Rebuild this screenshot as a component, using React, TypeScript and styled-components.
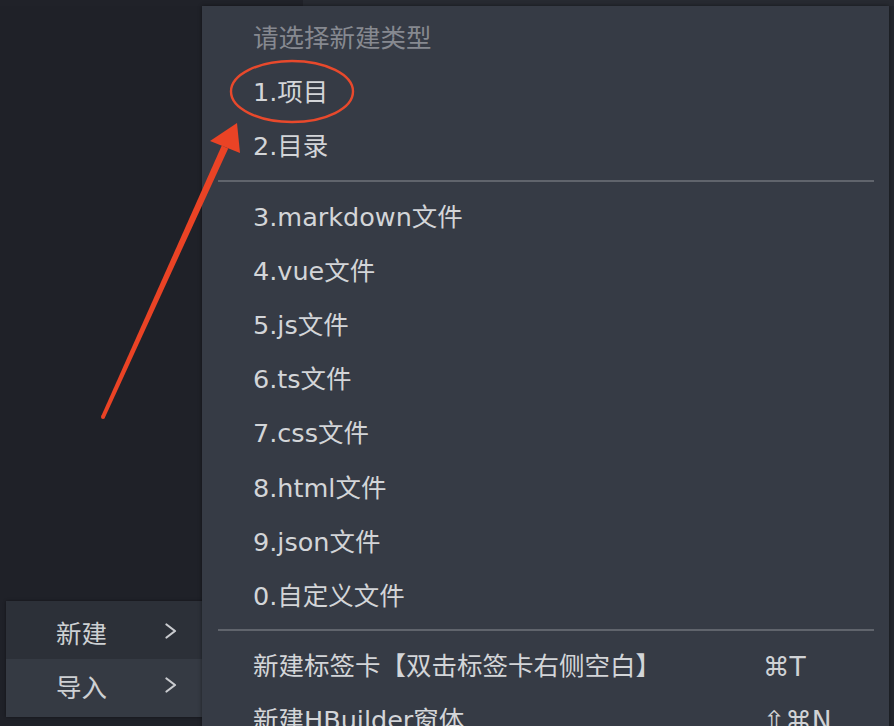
import styled, { createGlobalStyle } from "styled-components";

const GlobalStyle = createGlobalStyle`
  html, body {
    margin: 0;
    padding: 0;
    background: #1f2128;
  }
  body {
    font-family: "DejaVu Sans", "Noto Sans CJK SC", sans-serif;
  }
`;

type Item = { label: string; shortcut?: string };

const groups: Item[][] = [
  [{ label: "1.项目" }, { label: "2.目录" }],
  [
    { label: "3.markdown文件" },
    { label: "4.vue文件" },
    { label: "5.js文件" },
    { label: "6.ts文件" },
    { label: "7.css文件" },
    { label: "8.html文件" },
    { label: "9.json文件" },
    { label: "0.自定义文件" },
  ],
  [
    { label: "新建标签卡【双击标签卡右侧空白】", shortcut: "⌘T" },
    { label: "新建HBuilder窗体", shortcut: "⇧⌘N" },
  ],
];

function App() {
  return (
    <>
      <GlobalStyle />
      <Stage>
        <Sidebar>
          <PaneTop />
        </Sidebar>
        <Editor>
          <PaneTop $light />
        </Editor>

        <SubMenu>
          <SubRow $active>
            <span>新建</span>
            <Chevron />
          </SubRow>
          <SubRow>
            <span>导入</span>
            <Chevron />
          </SubRow>
        </SubMenu>

        <Menu>
          <MenuTitle>请选择新建类型</MenuTitle>
          {groups.map((group, gi) => (
            <Group key={gi}>
              {gi > 0 && <Separator />}
              {group.map((item) => (
                <MenuRow key={item.label}>
                  <span>{item.label}</span>
                  <Shortcut>{item.shortcut}</Shortcut>
                </MenuRow>
              ))}
            </Group>
          ))}
        </Menu>

        <Annotation viewBox="0 0 894 726" width="894" height="726">
          <ellipse
            cx="292"
            cy="91.5"
            rx="61"
            ry="30.5"
            fill="none"
            stroke="#e8492c"
            strokeWidth="2.4"
          />
          <polygon points="101.2,416.2 104.8,417.8 228.2,148.4 221.8,145.6" fill="#ea4325" />
          <circle cx="103" cy="417" r="2" fill="#ea4325" />
          <polygon points="237,123 210,141 240,153" fill="#ea4325" />
        </Annotation>
      </Stage>
    </>
  );
}

function Chevron() {
  return (
    <ChevronSvg viewBox="0 0 12 16" width="12" height="16">
      <polyline
        points="1.5,1.5 10,8 1.5,14.5"
        fill="none"
        stroke="#c9cbcf"
        strokeWidth="2.2"
        strokeLinecap="round"
        strokeLinejoin="round"
      />
    </ChevronSvg>
  );
}

export default App;

const Stage = styled.div`
  position: relative;
  width: 894px;
  height: 726px;
  overflow: hidden;
  display: grid;
  grid-template-columns: 303px 1fr;
`;

const Sidebar = styled.div`
  background: #1f2128;
  display: flex;
  flex-direction: column;
`;

const Editor = styled.div`
  background: #23262d;
  display: flex;
  flex-direction: column;
`;

const PaneTop = styled.div<{ $light?: boolean }>`
  height: 6px;
  background: ${(p) => (p.$light ? "#272a31" : "#202229")};
`;

const Menu = styled.div`
  position: absolute;
  left: 202px;
  top: 6px;
  width: 687px;
  height: 740px;
  box-sizing: border-box;
  padding-top: 5px;
  background: #363b45;
  box-shadow: 0 0 4px rgba(0, 0, 0, 0.45);
  font-size: 25.5px;
  color: #d3d5d8;
`;

const MenuTitle = styled.div`
  height: 54.2px;
  box-sizing: border-box;
  padding-bottom: 5px;
  display: flex;
  align-items: center;
  padding-left: 51px;
  color: #868990;
`;

const Group = styled.div`
  display: flex;
  flex-direction: column;
`;

const MenuRow = styled.div`
  height: 54.2px;
  box-sizing: border-box;
  padding-bottom: 5px;
  display: grid;
  grid-template-columns: 510px 1fr;
  align-items: center;
  padding-left: 51px;
  white-space: nowrap;
`;

const Shortcut = styled.span`
  font-size: 26.5px;
  color: #d0d2d5;
  padding-top: 5px;
`;

const Separator = styled.div`
  height: 2px;
  margin: 6px 15px 8px 16px;
  background: #60646c;
`;

const SubMenu = styled.div`
  position: absolute;
  left: 6px;
  top: 601px;
  width: 210px;
  display: flex;
  flex-direction: column;
  font-size: 25.5px;
  color: #cdd0d3;
  box-shadow: 0 0 3px rgba(0, 0, 0, 0.4);
`;

const SubRow = styled.div<{ $active?: boolean }>`
  height: 58px;
  box-sizing: border-box;
  padding-top: ${(p) => (p.$active ? "2px" : "0")};
  padding-bottom: ${(p) => (p.$active ? "0" : "6px")};
  display: flex;
  align-items: center;
  padding-left: 50px;
  background: ${(p) => (p.$active ? "#2c3038" : "#353a43")};

  span {
    width: 109px;
  }
`;

const ChevronSvg = styled.svg`
  display: block;
`;

const Annotation = styled.svg`
  position: absolute;
  left: 0;
  top: 0;
  pointer-events: none;
`;
